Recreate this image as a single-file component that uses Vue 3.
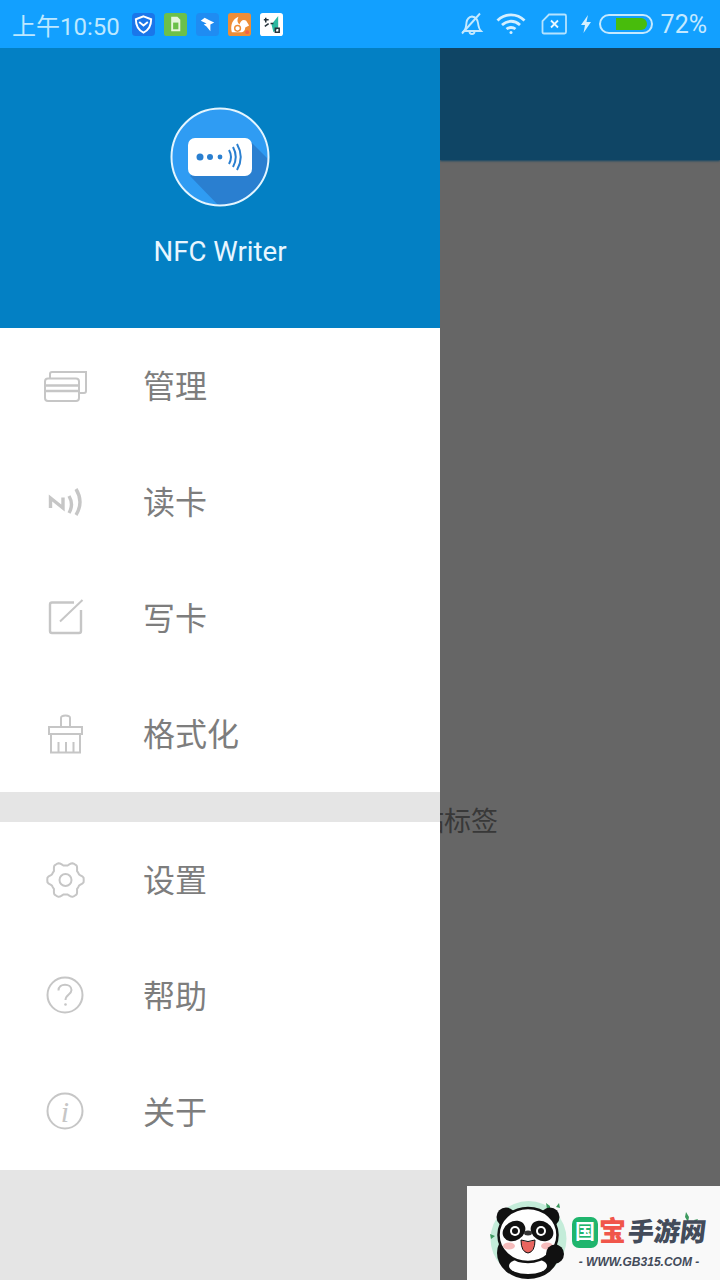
<template>
  <div class="screen">
    <header class="status-bar">
      <span class="clock">上午10:50</span>
      <div class="notify-icons">
        <svg class="app-icon" viewBox="0 0 24 24">
          <rect width="24" height="24" rx="4" fill="#1a76ea" />
          <path d="M12 3.500 20 6.500C20 13 17 18 12 20.500 7 18 4 13 4 6.500Z" fill="none" stroke="#fff" stroke-width="2" />
          <path d="M7.500 9.500 12 13 16.500 9.500" fill="none" stroke="#fff" stroke-width="2" />
        </svg>
        <svg class="app-icon" viewBox="0 0 24 24">
          <rect width="24" height="24" rx="3" fill="#6cc04a" />
          <path d="M7.500 4H14L17 7V19H7.500Z" fill="#e6f5dc" />
          <rect x="9.500" y="10" width="5.500" height="7" fill="#6cc04a" />
        </svg>
        <svg class="app-icon" viewBox="0 0 24 24">
          <rect width="24" height="24" rx="4" fill="#1f8cf2" />
          <path d="M5 8 9 5 15 8 19 10 15 12 15 19 11 14 8 12 11 11Z" fill="#fff" />
        </svg>
        <svg class="app-icon" viewBox="0 0 24 24">
          <rect width="24" height="24" rx="3" fill="#ee8d36" />
          <path d="M4 20C2 13 5 6 11 4 9 8 10 10 12 12 13 8 16 6 19 8L22 13 18 15C18 18 16 20 14 20Z" fill="#fff" />
          <circle cx="10" cy="16" r="3" fill="none" stroke="#ee8d36" stroke-width="1.500" />
          <circle cx="20" cy="20" r="2" fill="#f0604c" />
        </svg>
        <svg class="app-icon" viewBox="0 0 24 24">
          <rect width="24" height="24" rx="3" fill="#fff" />
          <path d="M12 12 19 3V16L14 20Z" fill="#2cb8a0" />
          <path d="M4 7H9M6 5V10M11 11H14M5 14 9 11M16 16H20V20H16Z" fill="none" stroke="#26323a" stroke-width="1.600" />
        </svg>
      </div>
      <div class="system-icons">
        <svg class="bell" viewBox="0 0 24 24" fill="none" stroke="#c4e9ff" stroke-width="1.900">
          <path d="M4 19C6 17 6 15 6.500 10.500 7 7 9 5 12 4.500 15 5 17.500 7 18 11 18.500 15 19 17 21 19Z" />
          <path d="M9.500 19.500A2.500 2.500 0 0 0 14.500 19.500" />
          <path d="M2 21.500 20 1.500" />
        </svg>
        <svg class="wifi" viewBox="0 0 30 24" fill="none" stroke="#d4efff" stroke-width="2.800">
          <path d="M1.500 8.500C9 1 21 1 28.500 8.500" />
          <path d="M6 13C11.500 8 18.500 8 24 13" />
          <path d="M10.500 17C13 15 17 15 19.500 17" />
          <circle cx="15" cy="20.500" r="1.500" fill="#d4efff" stroke="none" />
        </svg>
        <svg class="sim" viewBox="0 0 26 22" fill="none" stroke="#b5e3ff" stroke-width="1.800">
          <path d="M8 1.500H23.500Q25 1.500 25 3V19Q25 20.500 23.500 20.500H3Q1.500 20.500 1.500 19V8Z" />
          <path d="M10 7.500 17 14.500M17 7.500 10 14.500" stroke="#e8f7ff" />
        </svg>
        <svg class="bolt" viewBox="0 0 12 18"><path d="M8 0 1 10H5L3.500 18 11 7H6.500Z" fill="#d4efff" /></svg>
        <div class="battery"><div class="battery-fill"></div></div>
        <span class="percent">72%</span>
      </div>
    </header>

    <div class="content">
      <aside class="drawer">
        <div class="drawer-head">
          <svg class="logo" viewBox="0 0 100 100">
            <clipPath id="logo-clip"><circle cx="50" cy="50" r="48" /></clipPath>
            <circle cx="50" cy="50" r="48" fill="#2f9cf3" />
            <path d="M82 36 100 54V100H50L20 69Z" fill="#2a7fd0" clip-path="url(#logo-clip)" />
            <circle cx="50" cy="50" r="48.500" fill="none" stroke="#e4f5ff" stroke-width="2" />
            <rect x="18" y="31" width="64" height="38" rx="7" fill="#fff" />
            <circle cx="30" cy="50" r="3.500" fill="#2a7fd0" />
            <circle cx="40" cy="50" r="3" fill="#2a7fd0" />
            <circle cx="50" cy="50" r="2.400" fill="#2a7fd0" />
            <g fill="none" stroke="#2a7fd0" stroke-width="2">
              <path d="M59 43Q63 50 59 57" />
              <path d="M63 40Q68.500 50 63 60" />
              <path d="M67 37Q74.500 50 67 63" />
            </g>
          </svg>
          <div class="app-name">NFC Writer</div>
        </div>

        <ul class="menu">
          <li v-for="item in topItems" :key="item.label" class="menu-item">
            <svg class="menu-icon" viewBox="0 0 44 44" fill="none" stroke="#c6c6c6" stroke-width="2">
              <g v-if="item.icon === 'cards'">
                <rect x="2" y="14.500" width="34" height="22.500" rx="3" />
                <path d="M2 21.500H36M2 27H36" stroke-width="2.500" />
                <path d="M7 14V10Q7 8 9 8H43V27Q43 29 41 29H36" />
              </g>
              <g v-else-if="item.icon === 'nfc'" stroke-width="3.400">
                <path d="M7.500 28V18L20 28V17.500" />
                <path d="M26 16Q31 24.500 26 33" />
                <path d="M33 9Q41 22 33 35" />
              </g>
              <g v-else-if="item.icon === 'edit'">
                <path d="M31 6.500H9Q7 6.500 7 8.500V35Q7 37 9 37H36Q38 37 38 35V14" stroke-width="2.400" />
                <path d="M17 25.500 39.500 4" />
              </g>
              <g v-else>
                <path d="M18 15V6Q18 3.500 22.500 3.500 27 3.500 27 6V15" />
                <rect x="6" y="15" width="33" height="7" />
                <path d="M8 22V40.500H37V22" />
                <path d="M15.500 30V40M23 30V40M30.500 30V40" />
              </g>
            </svg>
            <span class="menu-label">{{ item.label }}</span>
          </li>
        </ul>
        <div class="menu-gap"></div>
        <ul class="menu">
          <li v-for="item in bottomItems" :key="item.label" class="menu-item">
            <svg class="menu-icon" viewBox="0 0 44 44" fill="none" stroke="#c6c6c6" stroke-width="2">
              <g v-if="item.icon === 'gear'">
                <path :d="gearPath" stroke-linejoin="round" />
                <circle cx="22.500" cy="22" r="6" />
              </g>
              <g v-else-if="item.icon === 'help'">
                <circle cx="22" cy="21" r="17.500" />
                <path d="M15.500 16.500C15.500 8.500 28.500 9 28.500 16 28.500 20.500 22.500 20.500 22.500 26" />
                <circle cx="22.500" cy="30.500" r="1.300" fill="#c6c6c6" stroke="none" />
              </g>
              <g v-else>
                <circle cx="22" cy="21" r="17.500" />
                <text class="info-glyph" x="22" y="32" text-anchor="middle">i</text>
              </g>
            </svg>
            <span class="menu-label">{{ item.label }}</span>
          </li>
        </ul>
        <div class="drawer-rest"></div>
      </aside>

      <main class="page">
        <div class="page-bar"></div>
        <div class="page-body">
          <span class="page-hint">贴标签</span>
        </div>
      </main>
    </div>

    <div class="watermark">
      <svg class="panda" viewBox="0 0 84 80">
        <circle cx="43.500" cy="39" r="38" fill="#c4ecd9" />
        <path d="M61 3 65 6 65 13 62 9Z M74 3 75 8 71 7Z M5 34 10 36 6 39Z" fill="#3d9a5f" />
        <circle cx="21" cy="17" r="9.500" fill="#111" />
        <circle cx="65" cy="17" r="9.500" fill="#111" />
        <ellipse cx="43" cy="53" rx="31" ry="26" fill="#111" />
        <ellipse cx="43" cy="66" rx="19" ry="8" fill="#fff" />
        <ellipse cx="43" cy="35" rx="29.500" ry="27" fill="#fff" stroke="#111" stroke-width="2.500" />
        <ellipse cx="29" cy="31" rx="12" ry="9.500" transform="rotate(-32 29 31)" fill="#111" />
        <ellipse cx="57" cy="31" rx="12" ry="9.500" transform="rotate(32 57 31)" fill="#111" />
        <circle cx="30" cy="31" r="5" fill="#fff" />
        <circle cx="56" cy="31" r="5" fill="#fff" />
        <circle cx="30" cy="31" r="3" fill="#111" />
        <circle cx="56" cy="31" r="3" fill="#111" />
        <ellipse cx="43" cy="33" rx="4" ry="2.500" fill="#333" />
        <path d="M36 40Q43 43 50 40 50 52 43 53 36 52 36 40Z" fill="#e8655f" stroke="#111" stroke-width="1" />
        <ellipse cx="24" cy="46" rx="6" ry="3.500" fill="#f6bcbc" />
        <ellipse cx="62" cy="46" rx="6" ry="3.500" fill="#f6bcbc" />
        <ellipse cx="70" cy="54" rx="9" ry="9.500" fill="#111" />
      </svg>
      <svg class="leaves" viewBox="0 0 16 14">
        <path d="M2 0 5 5 4 10 1 5Z M10 8 14 7 12 11Z" fill="#3d9a5f" />
      </svg>
      <div class="brand">
        <div class="brand-name">
          <span class="brand-badge">国</span>
          <span class="brand-red">宝</span>
          <span class="brand-rest">手游网</span>
        </div>
        <div class="brand-url">- WWW.GB315.COM -</div>
      </div>
    </div>
  </div>
</template>

<script setup>
const topItems = [
  { label: '管理', icon: 'cards' },
  { label: '读卡', icon: 'nfc' },
  { label: '写卡', icon: 'edit' },
  { label: '格式化', icon: 'brush' }
];

const bottomItems = [
  { label: '设置', icon: 'gear' },
  { label: '帮助', icon: 'help' },
  { label: '关于', icon: 'info' }
];

// six lobes, clamped so the teeth flatten out a bit
const gearPoints = [];
for (let i = 0; i < 96; i++) {
  const angle = (i / 96) * Math.PI * 2;
  const wave = Math.max(-1, Math.min(1, Math.cos(angle * 6) * 1.5));
  const radius = 16.4 + 1.8 * wave;
  gearPoints.push(`${(22.5 + radius * Math.cos(angle)).toFixed(2)} ${(22 + radius * Math.sin(angle)).toFixed(2)}`);
}
const gearPath = `M${gearPoints.join('L')}Z`;
</script>

<style>
html,
body {
  margin: 0;
  background: #666;
}
</style>

<style scoped>
.screen {
  position: relative;
  display: flex;
  flex-direction: column;
  width: 720px;
  height: 1280px;
  overflow: hidden;
  font-family: Roboto, "Noto Sans CJK SC", sans-serif;
}

.status-bar {
  display: flex;
  align-items: center;
  justify-content: space-between;
  flex: none;
  height: 48px;
  padding: 0 13px 0 12px;
  box-sizing: border-box;
  background: #12a0ff;
}

.clock {
  width: 120px;
  font-size: 24px;
  color: #bde8ff;
  white-space: nowrap;
}

.notify-icons {
  display: flex;
  flex: 1;
  gap: 9px;
}

.app-icon {
  width: 23px;
  height: 23px;
}

.system-icons {
  display: flex;
  align-items: center;
}

.bell {
  width: 24px;
  height: 24px;
  margin-right: 12px;
}

.wifi {
  width: 30px;
  height: 24px;
  margin-right: 15px;
}

.sim {
  width: 26px;
  height: 22px;
  margin-right: 13px;
}

.bolt {
  width: 12px;
  height: 18px;
  margin-right: 7px;
}

.battery {
  width: 54px;
  height: 20px;
  padding: 2px 4px 2px 15px;
  box-sizing: border-box;
  border: 2px solid #c4e9ff;
  border-radius: 10px;
  margin-right: 8px;
}

.battery-fill {
  height: 100%;
  border-radius: 0 6px 6px 0;
  background: #48bc0c;
}

.percent {
  font-size: 25px;
  color: #c4e9ff;
}

.content {
  display: flex;
  flex: 1;
  min-height: 0;
}

.drawer {
  display: flex;
  flex-direction: column;
  flex: none;
  width: 440px;
  background: #e5e5e5;
}

.drawer-head {
  display: flex;
  flex-direction: column;
  align-items: center;
  height: 280px;
  padding-top: 59px;
  box-sizing: border-box;
  background: #0380c4;
}

.logo {
  width: 100px;
  height: 100px;
}

.app-name {
  margin-top: 28px;
  font-size: 27.600px;
  line-height: 34px;
  color: #e8f6ff;
}

.menu {
  margin: 0;
  padding: 0;
  list-style: none;
  background: #fff;
}

.menu-item {
  display: flex;
  align-items: center;
  height: 116px;
  padding-left: 43px;
}

.menu-icon {
  flex: none;
  width: 44px;
  height: 44px;
  margin-right: 56px;
  overflow: visible;
}

.info-glyph {
  font-family: "Liberation Serif", serif;
  font-size: 30px;
  font-style: italic;
  fill: #c6c6c6;
  stroke: none;
}

.menu-label {
  padding-bottom: 4px;
  font-size: 32px;
  color: #7d7d7d;
}

.menu-gap {
  flex: none;
  height: 30px;
}

.drawer-rest {
  flex: 1;
}

.page {
  display: flex;
  flex-direction: column;
  flex: 1;
  min-width: 0;
  overflow: hidden;
  background: #666;
}

.page-bar {
  flex: none;
  height: 112px;
  background: #0f4565;
  box-shadow: 0 1px 2px #0f4565;
}

.page-body {
  flex: 1;
  padding-top: 644px;
  white-space: nowrap;
}

.page-hint {
  margin-left: -23px;
  font-size: 27px;
  line-height: 36px;
  color: #383838;
}

.watermark {
  position: absolute;
  right: 0;
  bottom: 0;
  display: flex;
  align-items: flex-start;
  width: 253px;
  height: 94px;
  padding: 14px 0 0 18px;
  box-sizing: border-box;
  background: #f9f9f9;
}

.leaves {
  position: absolute;
  top: 26px;
  left: 217px;
  width: 16px;
  height: 14px;
}

.panda {
  flex: none;
  width: 84px;
  height: 80px;
  margin-right: 3px;
}

.brand {
  display: flex;
  flex-direction: column;
  align-items: center;
  padding-top: 17px;
}

.brand-name {
  display: flex;
  align-items: center;
  font-weight: 700;
  line-height: 31px;
}

.brand-badge {
  width: 26px;
  height: 31px;
  border-radius: 7px;
  margin-right: 1px;
  font-size: 20px;
  text-align: center;
  color: #fff;
  background: #1fb56d;
}

.brand-red {
  margin-right: 2px;
  font-size: 27px;
  font-weight: 900;
  color: #f0564a;
}

.brand-rest {
  display: inline-block;
  font-size: 26px;
  font-weight: 900;
  color: #434b5a;
  transform: skewX(-7deg);
}

.brand-url {
  margin-top: 7px;
  font-family: "Liberation Sans", sans-serif;
  font-size: 12px;
  font-style: italic;
  font-weight: 700;
  line-height: 14px;
  color: #434b5a;
}
</style>
